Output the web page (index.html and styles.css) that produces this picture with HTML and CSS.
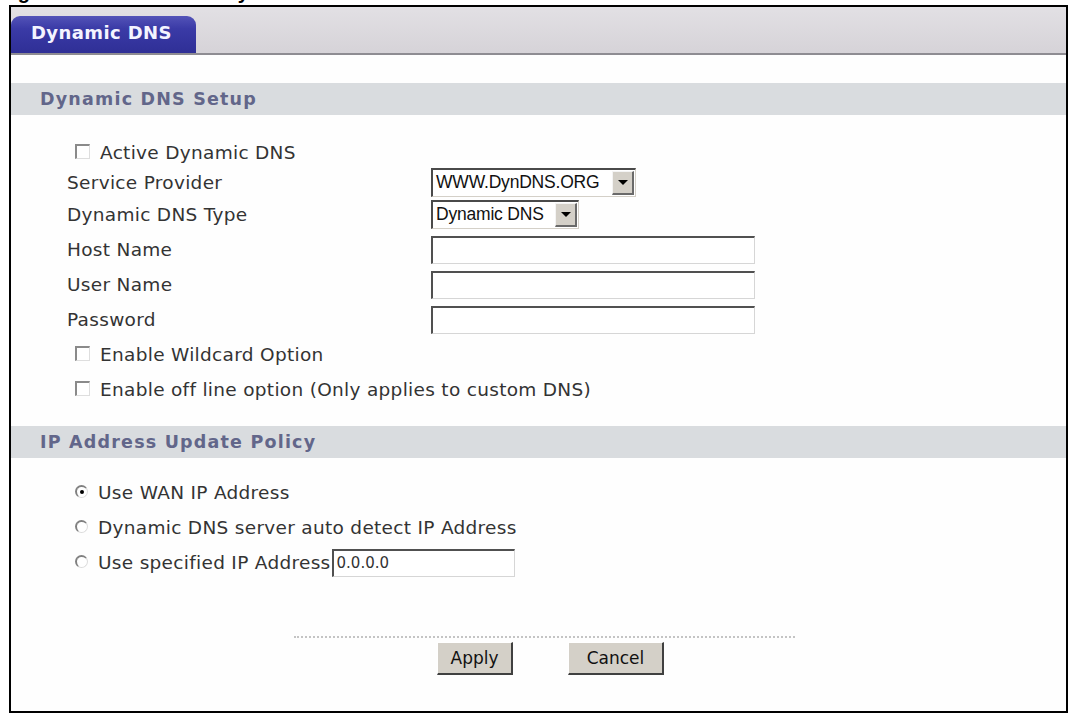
FILE: index.html
```html
<!DOCTYPE html>
<html lang="en">
<head>
    <meta charset="UTF-8">
    <title>Dynamic DNS</title>
    <link rel="stylesheet" href="styles.css">
</head>
<body>
<div class="caption"><span>Figure 73   Advanced &gt; Dynamic DNS</span></div>

<div class="frame">
    <div class="tabbar">
        <div class="tab">Dynamic DNS</div>
    </div>

    <div class="section-title first">Dynamic DNS Setup</div>

    <div class="fields">
        <div class="check-row"><span class="checkbox"></span>Active Dynamic DNS</div>

        <div class="label">Service Provider</div>
        <div class="control">
            <div class="select provider">
                <span class="value">WWW.DynDNS.ORG</span>
                <span class="arrow"></span>
            </div>
        </div>

        <div class="label">Dynamic DNS Type</div>
        <div class="control">
            <div class="select type">
                <span class="value">Dynamic DNS</span>
                <span class="arrow"></span>
            </div>
        </div>

        <div class="label">Host Name</div>
        <div class="control"><div class="textbox"></div></div>

        <div class="label">User Name</div>
        <div class="control"><div class="textbox"></div></div>

        <div class="label">Password</div>
        <div class="control"><div class="textbox"></div></div>

        <div class="check-row"><span class="checkbox"></span>Enable Wildcard Option</div>
        <div class="check-row"><span class="checkbox"></span>Enable off line option (Only applies to custom DNS)</div>
    </div>

    <div class="section-title">IP Address Update Policy</div>

    <div class="radios">
        <div class="radio-row"><span class="radio checked"></span>Use WAN IP Address</div>
        <div class="radio-row"><span class="radio"></span>Dynamic DNS server auto detect IP Address</div>
        <div class="radio-row"><span class="radio"></span>Use specified IP Address<div class="textbox ip">0.0.0.0</div></div>
    </div>

    <div class="footer">
        <div class="buttons">
            <div class="button apply">Apply</div>
            <div class="button cancel">Cancel</div>
        </div>
    </div>
</div>
</body>
</html>
```

FILE: styles.css
```css
body {
    margin: 0;
    background: #fff;
    font-family: 'DejaVu Sans', Verdana, sans-serif;
    color: #333;
}

.caption {
    height: 5px;
    overflow: hidden;
}

.caption span {
    display: block;
    margin-top: -19px;
    font: bold 20px/22px 'Liberation Sans', Arial, sans-serif;
    color: #000;
    white-space: pre;
}

.frame {
    margin-left: 9px;
    width: 1059px;
    height: 708px;
    box-sizing: border-box;
    border: 2px solid #000;
    background: #fefefe;
}

.tabbar {
    height: 46px;
    border-bottom: 2px solid #8e8c92;
    background: linear-gradient(#e2e0e4, #d6d3d8);
    display: flex;
    align-items: flex-end;
}

.tab {
    width: 185px;
    height: 37px;
    box-sizing: border-box;
    padding: 6px 0 0 20px;
    border-radius: 9px 9px 0 0;
    background: linear-gradient(#5353b8 0%, #3a3aa6 35%, #2f2f96 100%);
    color: #f4f4ff;
    font-weight: bold;
    font-size: 18px;
    letter-spacing: 0.4px;
}

.section-title {
    height: 32px;
    line-height: 32px;
    padding-left: 29px;
    background: #d9dcdf;
    color: #62668a;
    font-weight: bold;
    font-size: 17.5px;
    letter-spacing: 1.2px;
    margin-top: 19px;
}

.section-title.first {
    margin-top: 28px;
}

.fields {
    display: grid;
    grid-template-columns: 420px 1fr;
    grid-auto-rows: 35px;
    grid-template-rows: 30px 30px;
    padding-top: 22px;
    font-size: 18.5px;
    letter-spacing: 0.3px;
}

.label {
    padding-left: 56px;
    display: flex;
    align-items: center;
}

.control {
    display: flex;
    align-items: center;
    letter-spacing: 0;
}

.check-row {
    grid-column: 1 / 3;
    padding-left: 64px;
    display: flex;
    align-items: center;
}

.checkbox {
    width: 12px;
    height: 12px;
    border-top: 2px solid #8a8a8a;
    border-left: 2px solid #8a8a8a;
    border-right: 1px solid #dedede;
    border-bottom: 1px solid #dedede;
    background: #fff;
    margin: -2px 10px 0 0;
}

.select {
    display: flex;
    height: 29px;
    box-sizing: border-box;
    border-top: 2px solid #4a4a4a;
    border-left: 2px solid #4a4a4a;
    border-right: 1px solid #d4d0c8;
    border-bottom: 1px solid #d4d0c8;
    background: #fff;
    font: 17.5px 'Liberation Sans', Arial, sans-serif;
    color: #111;
}

.select.provider {
    width: 205px;
}

.select.type {
    width: 148px;
}

.select .value {
    flex: 1;
    padding-left: 3px;
    line-height: 25px;
    letter-spacing: -0.2px;
}

.select .arrow {
    width: 22px;
    margin: 1px;
    box-sizing: border-box;
    background: #d4d0c8;
    border-top: 1px solid #f4f4f4;
    border-left: 1px solid #f4f4f4;
    border-right: 2px solid #6a6a6a;
    border-bottom: 2px solid #6a6a6a;
    display: flex;
    align-items: center;
    justify-content: center;
}

.select .arrow::after {
    content: '';
    border-left: 5px solid transparent;
    border-right: 5px solid transparent;
    border-top: 5px solid #000;
}

.textbox {
    width: 324px;
    height: 28px;
    box-sizing: border-box;
    border-top: 2px solid #505050;
    border-left: 2px solid #505050;
    border-right: 1px solid #d6d6d6;
    border-bottom: 1px solid #d6d6d6;
    background: #fff;
}

.radios {
    padding-top: 17px;
    font-size: 18.5px;
    letter-spacing: 0.3px;
}

.radio-row {
    height: 35px;
    padding-left: 64px;
    display: flex;
    align-items: center;
}

.radio {
    width: 10px;
    height: 10px;
    border-radius: 50%;
    border-top: 2px solid #808080;
    border-left: 2px solid #808080;
    border-right: 1px solid #dcdcdc;
    border-bottom: 1px solid #dcdcdc;
    background: #fff;
    margin: -3px 10px 0 0;
    display: flex;
    align-items: center;
    justify-content: center;
}

.radio.checked::after {
    content: '';
    width: 4px;
    height: 4px;
    border-radius: 50%;
    background: #000;
}

.textbox.ip {
    width: 183px;
    margin-left: 1px;
    padding-left: 3px;
    line-height: 25px;
    font-size: 15px;
    letter-spacing: 0;
    color: #333;
}

.footer {
    margin: 56px 0 0 283px;
    width: 501px;
    border-top: 2px dotted #c4c4c4;
}

.buttons {
    display: flex;
    gap: 55px;
    padding: 4px 0 0 143px;
}

.button {
    height: 33px;
    box-sizing: border-box;
    background: #d4d0c8;
    border-top: 1px solid #fff;
    border-left: 1px solid #fff;
    border-right: 2px solid #404040;
    border-bottom: 2px solid #404040;
    font-size: 17px;
    color: #111;
    display: flex;
    align-items: center;
    justify-content: center;
}

.button.apply {
    width: 76px;
}

.button.cancel {
    width: 96px;
}
```
